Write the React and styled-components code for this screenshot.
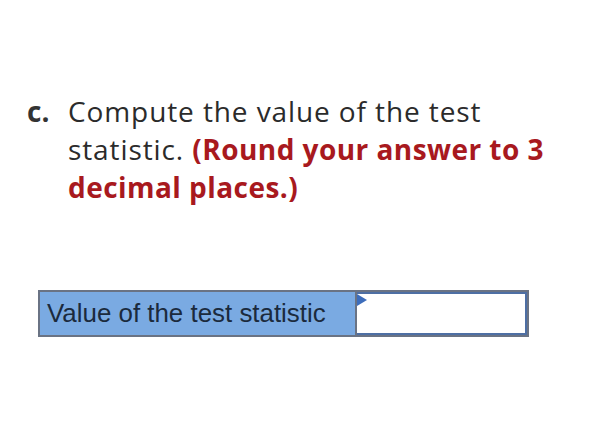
import React from 'react';
import styled, { createGlobalStyle } from 'styled-components';

const GlobalStyle = createGlobalStyle`
  html, body {
    margin: 0;
    padding: 0;
    background: #ffffff;
  }
`;

const Page = styled.div`
  width: 602px;
  height: 428px;
  box-sizing: border-box;
  padding: 92px 0 0 27px;
  font-family: "Open Sans", Lato, sans-serif;
  color: #2b2b2b;
`;

const Question = styled.div`
  display: flex;
  align-items: flex-start;
  font-size: 28px;
  line-height: 38px;
`;

const Marker = styled.span`
  flex: 0 0 41px;
  font-weight: 700;
  color: #333;
`;

const Prompt = styled.p`
  margin: 0;
  width: 490px;
  letter-spacing: 0.9px;
`;

const Note = styled.strong`
  color: #a8191e;
  font-weight: 700;
  letter-spacing: 0.45px;
`;

const AnswerTable = styled.div`
  display: flex;
  width: 491px;
  height: 47px;
  box-sizing: border-box;
  margin: 84px 0 0 11px;
  border: 2px solid #6a7384;
  background: #7aaae2;
`;

const LabelCell = styled.div`
  flex: 0 0 317px;
  display: flex;
  align-items: center;
  padding-left: 7px;
  box-sizing: border-box;
  font-family: "Liberation Sans", Arial, sans-serif;
  font-size: 25.9px;
  color: #1b2a3d;
  border-right: 2px solid #6a7384;
`;

const InputCell = styled.div`
  position: relative;
  flex: 1;
  background: #ffffff;
  border: 2px solid #4e6fa4;
  border-left: none;
`;

const Corner = styled.span`
  position: absolute;
  left: 0;
  top: 0;
  width: 0;
  height: 0;
  border-top: 6px solid transparent;
  border-bottom: 6px solid transparent;
  border-left: 10px solid #3d6dbb;
`;

export default function App() {
  return (
    <>
      <GlobalStyle />
      <Page>
        <Question>
          <Marker>c.</Marker>
          <Prompt>
            Compute the value of the test statistic.{' '}
            <Note>(Round your answer to 3 decimal places.)</Note>
          </Prompt>
        </Question>
        <AnswerTable>
          <LabelCell>Value of the test statistic</LabelCell>
          <InputCell>
            <Corner />
          </InputCell>
        </AnswerTable>
      </Page>
    </>
  );
}
